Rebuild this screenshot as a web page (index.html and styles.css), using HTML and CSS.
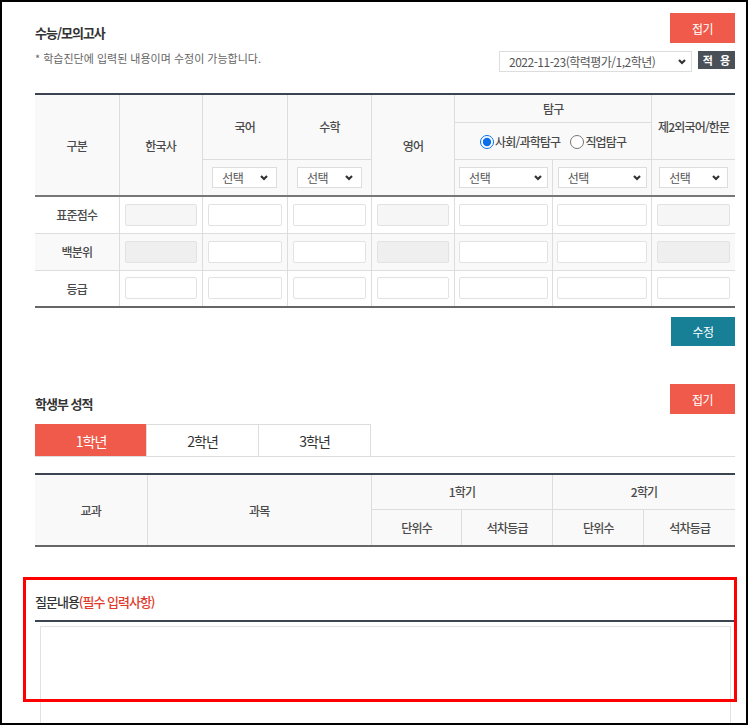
FILE: index.html
```html
<!DOCTYPE html>
<html lang="ko">
<head>
<meta charset="utf-8">
<title>성적 입력</title>
<link rel="stylesheet" href="styles.css">
</head>
<body>
<div class="frame">
  <section class="sec">
    <div class="head-row">
      <h2 class="title">수능/모의고사</h2>
      <button class="btn btn-red">접기</button>
    </div>
    <div class="sub-row">
      <p class="note">* 학습진단에 입력된 내용이며 수정이 가능합니다.</p>
      <div class="exam-pick">
        <span class="sel sel-exam"><select><option>2022-11-23(학력평가/1,2학년)</option></select><svg class="chev" viewBox="0 0 8 5"><path d="M1 1l3 3 3-3"/></svg></span>
        <button class="btn btn-dark">적 용</button>
      </div>
    </div>
    <table class="grid grid-exam">
      <colgroup>
        <col style="width:84px"><col style="width:83px"><col style="width:85px"><col style="width:84px"><col style="width:83px"><col style="width:98px"><col style="width:99px"><col style="width:83px">
      </colgroup>
      <thead>
        <tr class="r1">
          <th rowspan="3">구분</th>
          <th rowspan="3">한국사</th>
          <th rowspan="2">국어</th>
          <th rowspan="2">수학</th>
          <th rowspan="3">영어</th>
          <th colspan="2">탐구</th>
          <th rowspan="2">제2외국어/한문</th>
        </tr>
        <tr class="r2">
          <th colspan="2" class="radios"><label class="rad"><input type="radio" name="tg" checked>사회/과학탐구</label><label class="rad rad2"><input type="radio" name="tg">직업탐구</label></th>
        </tr>
        <tr class="r3">
          <th><span class="sel sel-s"><select><option>선택</option></select><svg class="chev" viewBox="0 0 8 5"><path d="M1 1l3 3 3-3"/></svg></span></th>
          <th><span class="sel sel-s"><select><option>선택</option></select><svg class="chev" viewBox="0 0 8 5"><path d="M1 1l3 3 3-3"/></svg></span></th>
          <th><span class="sel sel-l"><select><option>선택</option></select><svg class="chev" viewBox="0 0 8 5"><path d="M1 1l3 3 3-3"/></svg></span></th>
          <th><span class="sel sel-l"><select><option>선택</option></select><svg class="chev" viewBox="0 0 8 5"><path d="M1 1l3 3 3-3"/></svg></span></th>
          <th><span class="sel sel-m"><select><option>선택</option></select><svg class="chev" viewBox="0 0 8 5"><path d="M1 1l3 3 3-3"/></svg></span></th>
        </tr>
      </thead>
      <tbody>
        <tr>
          <td class="lbl">표준점수</td>
          <td><input class="inp dis" disabled></td>
          <td><input class="inp"></td>
          <td><input class="inp"></td>
          <td><input class="inp dis" disabled></td>
          <td class="tg"><input class="inp"></td>
          <td class="tg"><input class="inp"></td>
          <td><input class="inp dis" disabled></td>
        </tr>
        <tr class="even">
          <td class="lbl">백분위</td>
          <td><input class="inp dis" disabled></td>
          <td><input class="inp"></td>
          <td><input class="inp"></td>
          <td><input class="inp dis" disabled></td>
          <td class="tg"><input class="inp"></td>
          <td class="tg"><input class="inp"></td>
          <td><input class="inp dis" disabled></td>
        </tr>
        <tr>
          <td class="lbl">등급</td>
          <td><input class="inp"></td>
          <td><input class="inp"></td>
          <td><input class="inp"></td>
          <td><input class="inp"></td>
          <td class="tg"><input class="inp"></td>
          <td class="tg"><input class="inp"></td>
          <td><input class="inp"></td>
        </tr>
      </tbody>
    </table>
    <div class="actions"><button class="btn btn-teal">수정</button></div>
  </section>

  <section class="sec sec-school">
    <div class="head-row">
      <h2 class="title">학생부 성적</h2>
      <button class="btn btn-red">접기</button>
    </div>
    <div class="tabs">
      <a class="tab on">1학년</a>
      <a class="tab">2학년</a>
      <a class="tab">3학년</a>
    </div>
    <table class="grid grid-school">
      <colgroup>
        <col style="width:112px"><col style="width:224px"><col style="width:90px"><col style="width:91px"><col style="width:91px"><col style="width:91px">
      </colgroup>
      <thead>
        <tr class="s1">
          <th rowspan="2">교과</th>
          <th rowspan="2">과목</th>
          <th colspan="2">1학기</th>
          <th colspan="2">2학기</th>
        </tr>
        <tr class="s2">
          <th>단위수</th>
          <th>석차등급</th>
          <th>단위수</th>
          <th>석차등급</th>
        </tr>
      </thead>
    </table>
  </section>

  <section class="sec sec-ask">
    <h3 class="ask-title">질문내용<span class="req">(필수 입력사항)</span></h3>
    <textarea class="ask-box"></textarea>
    <div class="mark"></div>
  </section>
</div>
</body>
</html>
```

FILE: styles.css
```css
* { box-sizing: border-box; }
html, body { margin: 0; padding: 0; background: #fff; }
body {
  font-family: "Noto Sans CJK KR", "Noto Sans", sans-serif;
  color: #444;
}
.frame {
  position: relative;
  width: 748px;
  height: 725px;
  border: 2px solid #000;
  padding: 11px 11px 0 33px;
  overflow: hidden;
}
.sec { position: relative; }

.head-row {
  display: flex;
  justify-content: space-between;
  align-items: flex-end;
  height: 30px;
}
.title {
  margin: 0 0 2px;
  font-size: 13px;
  line-height: 16px;
  font-weight: 700;
  color: #333;
  letter-spacing: -1px;
}
.btn {
  border: 0;
  padding: 0;
  font-family: inherit;
  color: #fff;
  cursor: pointer;
}
.btn-red {
  width: 65px;
  height: 30px;
  background: #f05a4b;
  font-size: 12px;
  letter-spacing: -0.5px;
}
.btn-teal {
  width: 64px;
  height: 29px;
  background: #177f96;
  font-size: 12px;
  letter-spacing: -0.5px;
}
.btn-dark {
  width: 37px;
  height: 18px;
  background: #4a5058;
  font-size: 11px;
  font-weight: 700;
  letter-spacing: 2px;
  line-height: 18px;
  padding-left: 2px;
}

.sub-row {
  display: flex;
  justify-content: space-between;
  align-items: flex-start;
  margin-top: 8px;
}
.note {
  margin: 0;
  font-size: 11px;
  line-height: 14px;
  color: #666;
  letter-spacing: 0;
}
.exam-pick {
  display: flex;
  align-items: flex-start;
  gap: 6px;
}

.sel {
  position: relative;
  display: inline-block;
  vertical-align: middle;
}
.sel select {
  -webkit-appearance: none;
  appearance: none;
  display: block;
  width: 100%;
  height: 21px;
  margin: 0;
  border: 1px solid #ddd;
  border-radius: 0;
  background: #fff;
  font-family: inherit;
  font-size: 12px;
  line-height: 19px;
  color: #555;
  padding: 0 0 0 9px;
  letter-spacing: -0.5px;
}
.chev {
  position: absolute;
  right: 9px;
  top: 8px;
  width: 8px;
  height: 5px;
  pointer-events: none;
  fill: none;
  stroke: #333;
  stroke-width: 2.2;
  overflow: visible;
}
.sel-exam { width: 193px; }
.sel-exam .chev { right: 6px; }
.sel-s { width: 65px; }
.sel-l { width: 89px; }
.sel-l .chev { right: 6px; }
.sel-m { width: 69px; }
.sel-m .chev { right: 8px; }

.grid {
  width: 100%;
  border-collapse: collapse;
  table-layout: fixed;
  border-top: 2px solid #3d4451;
  border-bottom: 2px solid #666;
  border-left: hidden;
  border-right: hidden;
}
.grid th, .grid td {
  border: 1px solid #ddd;
  padding: 0;
  text-align: center;
  font-size: 12px;
  font-weight: 500;
  color: #4a4a4a;
  letter-spacing: -0.8px;
}
.grid thead th { background: #f9f9f9; }
.grid-exam { margin-top: 21px; }
.grid-exam .r1 { height: 28px; }
.grid-exam .r2 { height: 37px; }
.grid-exam .r3 { height: 37px; }
.grid-exam tbody tr { height: 37px; }
.grid-exam tbody tr:first-child td { border-top: 2px solid #777; }
.grid-exam td { padding: 0 5px; }
.grid-exam td.tg { padding: 0 4px; }
.grid-exam td.lbl { padding: 0; }
.grid-exam tr.even td { background: #f9f9f9; }

.rad {
  display: inline-flex;
  align-items: center;
  vertical-align: middle;
}
.rad input {
  margin: 0 1px 0 0;
  width: 14px;
  height: 14px;
  accent-color: #0a6fe8;
}
.rad2 { margin-left: 10px; }

.inp {
  display: block;
  width: 100%;
  height: 22px;
  margin: 0;
  padding: 0 4px;
  border: 1px solid #e2e2e2;
  border-radius: 2px;
  background: #fff;
  font-family: inherit;
}
.inp.dis { background: #f6f6f6; }
tr.even .inp.dis { background: #efefef; }

.actions {
  display: flex;
  justify-content: flex-end;
  margin-top: 9px;
}

.sec-school { margin-top: 38px; }
.tabs {
  display: flex;
  margin-top: 10px;
  border-bottom: 1px solid #ddd;
  padding-left: 0;
}
.tab {
  display: flex;
  align-items: center;
  justify-content: center;
  width: 113px;
  height: 32px;
  border: 1px solid #ddd;
  border-bottom: 0;
  margin-left: -1px;
  font-size: 14px;
  color: #333;
  letter-spacing: -1px;
  background: #fff;
}
.tab:first-child { margin-left: 0; width: 112px; }
.tab.on {
  background: #f05a4b;
  border-color: #f05a4b;
  color: #fff;
}
.grid-school { margin-top: 16px; }
.grid-school .s1 { height: 35px; }
.grid-school .s2 { height: 37px; }

.sec-ask { margin-top: 45px; }
.ask-title {
  margin: 0;
  font-size: 13px;
  line-height: 20px;
  font-weight: 500;
  color: #333;
  letter-spacing: -1px;
  padding-bottom: 8px;
  border-bottom: 2px solid #3d4451;
}
.req { color: #e23a2a; }
.ask-box {
  display: block;
  margin: 4px 0 0 5px;
  width: 691px;
  height: 140px;
  border: 1px solid #e2e2e2;
  resize: none;
  font-family: inherit;
}
.mark {
  position: absolute;
  left: -12px;
  top: -15px;
  width: 714px;
  height: 125px;
  border: 3px solid #f00;
  pointer-events: none;
}
```
